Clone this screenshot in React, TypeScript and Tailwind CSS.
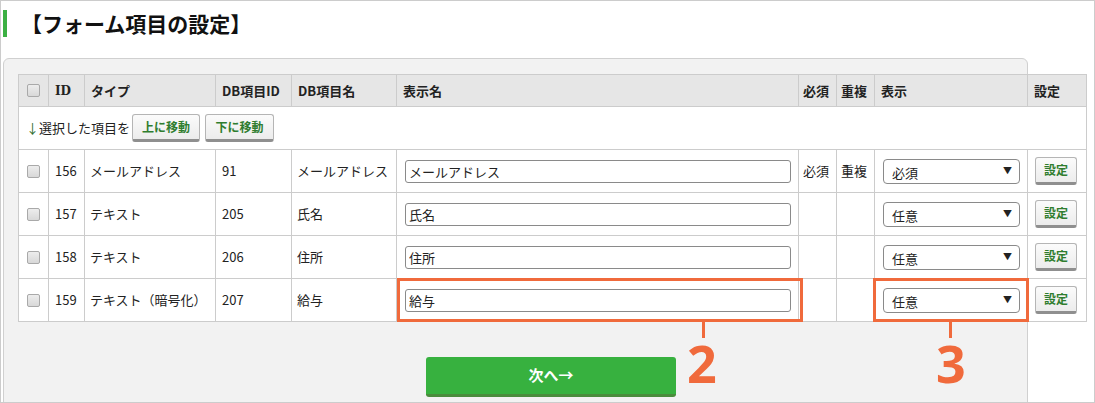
import React from "react";

interface Row {
  id: number;
  type: string;
  dbId: number;
  dbName: string;
  label: string;
  required: boolean;
  unique: boolean;
  show: string;
}

const rows: Row[] = [
  { id: 156, type: "メールアドレス", dbId: 91, dbName: "メールアドレス", label: "メールアドレス", required: true, unique: true, show: "必須" },
  { id: 157, type: "テキスト", dbId: 205, dbName: "氏名", label: "氏名", required: false, unique: false, show: "任意" },
  { id: 158, type: "テキスト", dbId: 206, dbName: "住所", label: "住所", required: false, unique: false, show: "任意" },
  { id: 159, type: "テキスト（暗号化）", dbId: 207, dbName: "給与", label: "給与", required: false, unique: false, show: "任意" },
];

const jp = "font-['Noto_Sans_CJK_JP','Noto_Sans',sans-serif]";

const Check = () => (
  <span className="mx-auto block h-[13px] w-[13px] rounded-[2px] border border-[#a9a9a9] bg-gradient-to-b from-[#ededed] to-[#d8d8d8]" />
);

const SmallButton = ({ label, className = "" }: { label: string; className?: string }) => (
  <button
    className={`rounded-[3px] border border-[#b5b5b5] border-b-[3px] border-b-[#8f8f8f] bg-gradient-to-b from-[#fbfbfb] to-[#ececec] text-[12px] font-bold leading-none text-[#2f7d2f] ${className}`}
  >
    {label}
  </button>
);

const th = "border border-[#cccccc] bg-[#e6e6e6] px-[6px] text-left font-bold h-[32px]";
const td = "border border-[#cccccc] px-[6px] h-[43px]";

export default function App() {
  return (
    <div className={`relative h-[403px] w-[1095px] overflow-hidden border border-[#cccccc] bg-white text-[13px] text-[#222] ${jp}`}>
      {/* title */}
      <div className="flex items-center pt-[9px]">
        <span className="ml-[2px] h-[27px] w-[4px] bg-[#3cb043]" />
        <h1 className="ml-[14px] text-[21px] font-bold leading-[27px] text-[#111]">【フォーム項目の設定】</h1>
      </div>

      {/* panel */}
      <div className="ml-[2px] mt-[21px] h-[345px] w-[1025px] rounded-t-[6px] border border-[#d0d0d0] bg-[#f2f2f2] pl-[14px] pt-[15px]">
        <table className="w-[1068px] table-fixed border-collapse bg-white">
          <colgroup>
            <col className="w-[30px]" />
            <col className="w-[36px]" />
            <col className="w-[131px]" />
            <col className="w-[76px]" />
            <col className="w-[105px]" />
            <col className="w-[402px]" />
            <col className="w-[38px]" />
            <col className="w-[38px]" />
            <col className="w-[153px]" />
            <col className="w-[59px]" />
          </colgroup>
          <thead>
            <tr>
              <th className={`${th} !px-0`}><Check /></th>
              <th className={`${th} font-['DejaVu_Serif',serif] text-[12px]`}>ID</th>
              <th className={th}>タイプ</th>
              <th className={th}>DB項目ID</th>
              <th className={th}>DB項目名</th>
              <th className={th}>表示名</th>
              <th className={`${th} !px-[4px]`}>必須</th>
              <th className={`${th} !px-[4px]`}>重複</th>
              <th className={th}>表示</th>
              <th className={th}>設定</th>
            </tr>
          </thead>
          <tbody>
            <tr>
              <td colSpan={10} className={`${td} !px-[7px]`}>
                <div className="flex items-center">
                  <span className="text-[#2f6f2f]">↓</span>
                  <span>選択した項目を</span>
                  <SmallButton label="上に移動" className="ml-[2px] h-[28px] w-[68px]" />
                  <SmallButton label="下に移動" className="ml-[5px] h-[28px] w-[69px]" />
                </div>
              </td>
            </tr>
            {rows.map((r) => (
              <tr key={r.id}>
                <td className={`${td} !px-0`}><Check /></td>
                <td className={td}>{r.id}</td>
                <td className={`${td} !px-[5px]`}>{r.type}</td>
                <td className={td}>{r.dbId}</td>
                <td className={`${td} !px-[5px] whitespace-nowrap`}>{r.dbName}</td>
                <td className={`${td} !px-[8px]`}>
                  <input
                    readOnly
                    defaultValue={r.label}
                    className="block h-[23px] w-[386px] rounded-[3px] border border-[#8a8a8a] bg-white px-[3px] text-[13px] text-[#222] outline-none"
                  />
                </td>
                <td className={`${td} !px-[4px]`}>{r.required ? "必須" : ""}</td>
                <td className={`${td} !px-[4px]`}>{r.unique ? "重複" : ""}</td>
                <td className={`${td} !px-[8px]`}>
                  <div className="flex h-[25px] w-[137px] items-center justify-between rounded-[4px] border border-[#8a8a8a] bg-white pl-[8px] pr-[7px]">
                    <span className="pt-[3px]">{r.show}</span>
                    <span className="text-[9px]">▼</span>
                  </div>
                </td>
                <td className={`${td} !px-[7px]`}>
                  <SmallButton label="設定" className="h-[28px] w-[42px]" />
                </td>
              </tr>
            ))}
          </tbody>
        </table>

        <button className="ml-[408px] mt-[35px] h-[40px] w-[250px] rounded-[3px] border-b-[3px] border-b-[#4a8c3c] bg-[#37b13f] text-[15px] font-bold text-white">
          次へ→
        </button>
      </div>

      {/* annotations */}
      <div className="absolute left-[396px] top-[277px] h-[44px] w-[406px] border-[3px] border-[#f06a3c]" />
      <div className="absolute left-[701px] top-[321px] h-[16px] w-[3px] bg-[#f06a3c]" />
      <div className="absolute left-[686px] top-[330px] text-[52px] font-bold leading-[64px] text-[#f06a3c] font-['Noto_Sans',sans-serif]">2</div>

      <div className="absolute left-[872px] top-[277px] h-[44px] w-[156px] border-[3px] border-[#f06a3c]" />
      <div className="absolute left-[948px] top-[321px] h-[16px] w-[3px] bg-[#f06a3c]" />
      <div className="absolute left-[935px] top-[330px] text-[52px] font-bold leading-[64px] text-[#f06a3c] font-['Noto_Sans',sans-serif]">3</div>
    </div>
  );
}
